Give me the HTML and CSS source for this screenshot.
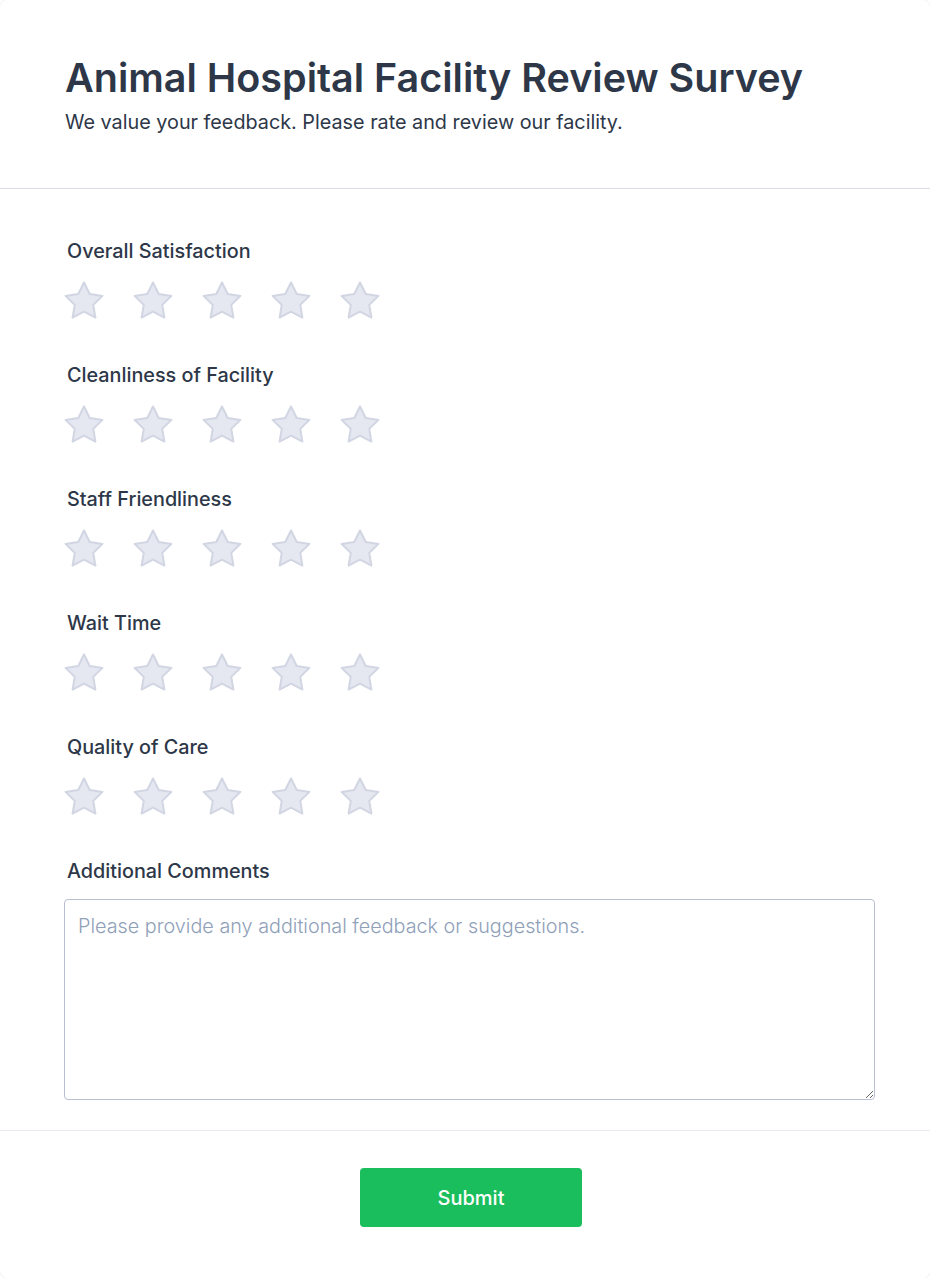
FILE: index.html
```html
<!DOCTYPE html>
<html lang="en">
<head>
<meta charset="utf-8">
<title>Animal Hospital Facility Review Survey</title>
<link rel="stylesheet" href="styles.css">
</head>
<body>
<div class="card">
  <header class="head">
    <h1 class="title">Animal Hospital Facility Review Survey</h1>
    <p class="subtitle">We value your feedback. Please rate and review our facility.</p>
  </header>
  <main class="body">
    <section class="field">
      <div class="label">Overall Satisfaction</div>
      <div class="stars">
        <svg class="star" viewBox="1.2 1.2 21.6 20.6"><path d="M12 2l3.09 6.26L22 9.27l-5 4.87 1.18 6.88L12 17.770l-6.18 3.25L7 14.14 2 9.27l6.91-1.01L12 2z"/></svg>
        <svg class="star" viewBox="1.2 1.2 21.6 20.6"><path d="M12 2l3.09 6.26L22 9.27l-5 4.87 1.18 6.88L12 17.77l-6.18 3.25L7 14.14 2 9.27l6.91-1.01L12 2z"/></svg>
        <svg class="star" viewBox="1.2 1.2 21.6 20.6"><path d="M12 2l3.09 6.26L22 9.27l-5 4.87 1.18 6.88L12 17.77l-6.18 3.25L7 14.14 2 9.27l6.91-1.01L12 2z"/></svg>
        <svg class="star" viewBox="1.2 1.2 21.6 20.6"><path d="M12 2l3.09 6.26L22 9.27l-5 4.87 1.18 6.88L12 17.77l-6.18 3.25L7 14.14 2 9.27l6.91-1.01L12 2z"/></svg>
        <svg class="star" viewBox="1.2 1.2 21.6 20.6"><path d="M12 2l3.09 6.26L22 9.27l-5 4.87 1.18 6.88L12 17.77l-6.18 3.25L7 14.14 2 9.27l6.91-1.01L12 2z"/></svg>
      </div>
    </section>
    <section class="field">
      <div class="label">Cleanliness of Facility</div>
      <div class="stars">
        <svg class="star" viewBox="1.2 1.2 21.6 20.6"><path d="M12 2l3.09 6.26L22 9.27l-5 4.87 1.18 6.88L12 17.77l-6.18 3.25L7 14.14 2 9.27l6.91-1.01L12 2z"/></svg>
        <svg class="star" viewBox="1.2 1.2 21.6 20.6"><path d="M12 2l3.09 6.26L22 9.27l-5 4.87 1.18 6.88L12 17.77l-6.18 3.25L7 14.14 2 9.27l6.91-1.01L12 2z"/></svg>
        <svg class="star" viewBox="1.2 1.2 21.6 20.6"><path d="M12 2l3.09 6.26L22 9.27l-5 4.87 1.18 6.88L12 17.77l-6.18 3.25L7 14.14 2 9.27l6.91-1.01L12 2z"/></svg>
        <svg class="star" viewBox="1.2 1.2 21.6 20.6"><path d="M12 2l3.09 6.26L22 9.27l-5 4.87 1.18 6.88L12 17.77l-6.18 3.25L7 14.14 2 9.27l6.91-1.01L12 2z"/></svg>
        <svg class="star" viewBox="1.2 1.2 21.6 20.6"><path d="M12 2l3.09 6.26L22 9.27l-5 4.87 1.18 6.88L12 17.77l-6.18 3.25L7 14.14 2 9.27l6.91-1.01L12 2z"/></svg>
      </div>
    </section>
    <section class="field">
      <div class="label">Staff Friendliness</div>
      <div class="stars">
        <svg class="star" viewBox="1.2 1.2 21.6 20.6"><path d="M12 2l3.09 6.26L22 9.27l-5 4.87 1.18 6.88L12 17.77l-6.18 3.25L7 14.14 2 9.27l6.91-1.01L12 2z"/></svg>
        <svg class="star" viewBox="1.2 1.2 21.6 20.6"><path d="M12 2l3.09 6.26L22 9.27l-5 4.87 1.18 6.88L12 17.77l-6.18 3.25L7 14.14 2 9.27l6.91-1.01L12 2z"/></svg>
        <svg class="star" viewBox="1.2 1.2 21.6 20.6"><path d="M12 2l3.09 6.26L22 9.27l-5 4.87 1.18 6.88L12 17.77l-6.18 3.25L7 14.14 2 9.27l6.91-1.01L12 2z"/></svg>
        <svg class="star" viewBox="1.2 1.2 21.6 20.6"><path d="M12 2l3.09 6.26L22 9.27l-5 4.87 1.18 6.88L12 17.77l-6.18 3.25L7 14.14 2 9.27l6.91-1.01L12 2z"/></svg>
        <svg class="star" viewBox="1.2 1.2 21.6 20.6"><path d="M12 2l3.09 6.26L22 9.27l-5 4.87 1.18 6.88L12 17.77l-6.18 3.25L7 14.14 2 9.27l6.91-1.01L12 2z"/></svg>
      </div>
    </section>
    <section class="field">
      <div class="label">Wait Time</div>
      <div class="stars">
        <svg class="star" viewBox="1.2 1.2 21.6 20.6"><path d="M12 2l3.09 6.26L22 9.27l-5 4.87 1.18 6.88L12 17.77l-6.18 3.25L7 14.14 2 9.27l6.91-1.01L12 2z"/></svg>
        <svg class="star" viewBox="1.2 1.2 21.6 20.6"><path d="M12 2l3.09 6.26L22 9.27l-5 4.87 1.18 6.88L12 17.77l-6.18 3.25L7 14.14 2 9.27l6.91-1.01L12 2z"/></svg>
        <svg class="star" viewBox="1.2 1.2 21.6 20.6"><path d="M12 2l3.09 6.26L22 9.27l-5 4.87 1.18 6.88L12 17.77l-6.18 3.25L7 14.14 2 9.27l6.91-1.01L12 2z"/></svg>
        <svg class="star" viewBox="1.2 1.2 21.6 20.6"><path d="M12 2l3.09 6.26L22 9.27l-5 4.87 1.18 6.88L12 17.77l-6.18 3.25L7 14.14 2 9.27l6.91-1.01L12 2z"/></svg>
        <svg class="star" viewBox="1.2 1.2 21.6 20.6"><path d="M12 2l3.09 6.26L22 9.27l-5 4.87 1.18 6.88L12 17.77l-6.18 3.25L7 14.14 2 9.27l6.91-1.01L12 2z"/></svg>
      </div>
    </section>
    <section class="field">
      <div class="label">Quality of Care</div>
      <div class="stars">
        <svg class="star" viewBox="1.2 1.2 21.6 20.6"><path d="M12 2l3.09 6.26L22 9.27l-5 4.87 1.18 6.88L12 17.77l-6.18 3.25L7 14.14 2 9.27l6.91-1.01L12 2z"/></svg>
        <svg class="star" viewBox="1.2 1.2 21.6 20.6"><path d="M12 2l3.09 6.26L22 9.27l-5 4.87 1.18 6.88L12 17.77l-6.18 3.25L7 14.14 2 9.27l6.91-1.01L12 2z"/></svg>
        <svg class="star" viewBox="1.2 1.2 21.6 20.6"><path d="M12 2l3.09 6.26L22 9.27l-5 4.87 1.18 6.88L12 17.77l-6.18 3.25L7 14.14 2 9.27l6.91-1.01L12 2z"/></svg>
        <svg class="star" viewBox="1.2 1.2 21.6 20.6"><path d="M12 2l3.09 6.26L22 9.27l-5 4.87 1.18 6.88L12 17.77l-6.18 3.25L7 14.14 2 9.27l6.91-1.01L12 2z"/></svg>
        <svg class="star" viewBox="1.2 1.2 21.6 20.6"><path d="M12 2l3.09 6.26L22 9.27l-5 4.87 1.18 6.88L12 17.77l-6.18 3.25L7 14.14 2 9.27l6.91-1.01L12 2z"/></svg>
      </div>
    </section>
    <section class="field comments">
      <label class="label" for="comments">Additional Comments</label>
      <textarea id="comments" class="textarea" placeholder="Please provide any additional feedback or suggestions."></textarea>
    </section>
  </main>
  <footer class="foot">
    <button class="submit" type="button">Submit</button>
  </footer>
</div>
</body>
</html>
```

FILE: styles.css
```css
* { box-sizing: border-box; }
html, body { margin: 0; padding: 0; background: #ffffff; }
body {
  font-family: Inter, "Noto Sans", sans-serif;
  color: #2d3748;
}
.card {
  width: 930px;
  min-height: 1278px;
  background: #ffffff;
  border-radius: 8px;
  box-shadow: 0 0 0 1px rgba(30, 40, 80, 0.05);
  display: flex;
  flex-direction: column;
}
.head {
  padding: 55px 64px 52px 65px;
  border-bottom: 1px solid #dcdbea;
}
.title {
  margin: 0;
  font-size: 39.5px;
  line-height: 46px;
  font-weight: 600;
  color: #2d3748;
}
.subtitle {
  margin: 7px 0 0;
  font-size: 19.8px;
  line-height: 28px;
  font-weight: 400;
  color: #2d3748;
}
.body {
  padding: 48px 55px 30px 64px;
  border-bottom: 1px solid #e9ebf2;
}
.field {
  display: flex;
  flex-direction: column;
  margin-bottom: 40px;
}
.label {
  display: block;
  padding-left: 3px;
  font-size: 19.8px;
  line-height: 28px;
  font-weight: 500;
  color: #2d3748;
}
.stars {
  display: flex;
  gap: 29px;
  margin-top: 16px;
  height: 40px;
}
.star {
  width: 40px;
  height: 38px;
  fill: #e5e8f1;
  stroke: #d2d6e3;
  stroke-width: 1.1;
  stroke-linejoin: round;
}
.comments { margin-bottom: 0; }
.comments .label { margin-bottom: 14px; }
.textarea {
  display: block;
  width: 811px;
  height: 201px;
  padding: 12px 13px;
  border: 1px solid #b9bfd0;
  border-radius: 4px;
  font-family: Inter, "Noto Sans", sans-serif;
  font-size: 19.8px;
  line-height: 28px;
  font-weight: 400;
  color: #2d3748;
  resize: vertical;
  outline: none;
}
.textarea::placeholder { color: #8fa0b9; font-weight: 300; }
.foot {
  flex: 1;
  display: flex;
  justify-content: center;
  padding: 37px 0 50px 12px;
}
.submit {
  width: 222px;
  height: 59px;
  border: none;
  border-radius: 4px;
  background: #1bbe5d;
  color: #ffffff;
  font-family: Inter, "Noto Sans", sans-serif;
  font-size: 20px;
  font-weight: 500;
  cursor: pointer;
}
```
